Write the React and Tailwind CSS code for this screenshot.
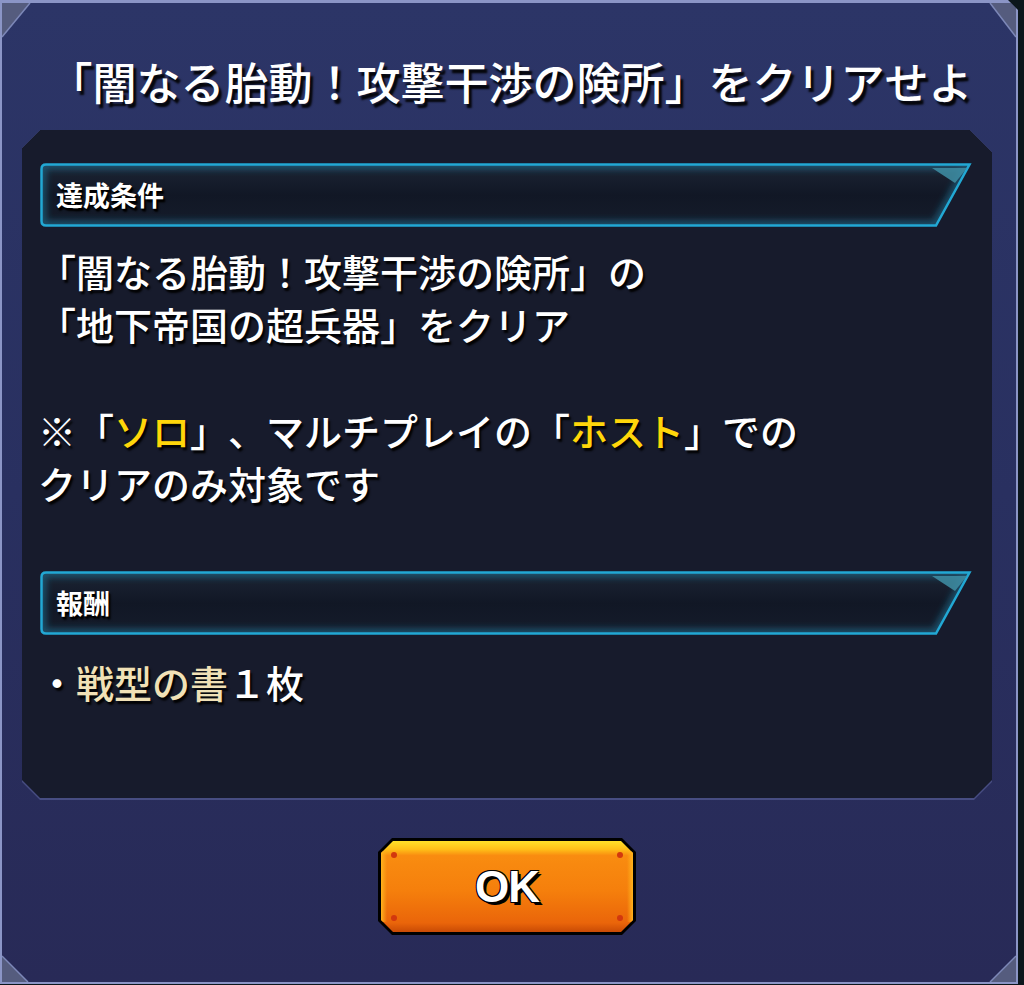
const HP = "M6 1.5 H929.5 L896 62.5 H6 Q1.5 62.5 1.5 58 V6 Q1.5 1.5 6 1.5 Z";

function SectionHeader({ label }) {
  return (
    <div className="relative w-[932px] h-[64px]">
      <svg className="absolute inset-0" width="932" height="64" viewBox="0 0 932 64">
        <defs>
          <linearGradient id="hg" x1="0" y1="0" x2="0" y2="1">
            <stop offset="0" stopColor="#1c2535" />
            <stop offset="0.5" stopColor="#111725" />
            <stop offset="1" stopColor="#151c2b" />
          </linearGradient>
          <clipPath id="hc">
            <path d={HP} />
          </clipPath>
          <filter id="hb" x="-5%" y="-50%" width="110%" height="200%">
            <feGaussianBlur stdDeviation="3" />
          </filter>
        </defs>
        <path d={HP} fill="url(#hg)" />
        <g clipPath="url(#hc)">
          <path d={HP} fill="none" stroke="#1e7fa3" strokeWidth="10" strokeOpacity="0.5" filter="url(#hb)" />
        </g>
        <path d={HP} fill="none" stroke="#22a8d4" strokeWidth="2.5" />
        <polygon points="892,5 927,5 915,20" fill="#3f8fa6" opacity="0.85" />
      </svg>
      <div className="relative h-full flex items-center pl-[16px] text-[27px] font-bold text-white [text-shadow:2px_3px_2px_rgba(0,0,0,1),1px_2px_1px_rgba(0,0,0,1)]">
        {label}
      </div>
    </div>
  );
}

function Corner({ className, points, line }) {
  return (
    <svg className={"absolute " + className} width="40" height="40" viewBox="0 0 40 40">
      <polygon points={points} fill="#555c7e" />
      <polyline points={line} fill="none" stroke="#7d88b8" strokeWidth="1.5" />
    </svg>
  );
}

export default function App() {
  return (
    <div className="w-[1024px] h-[985px] bg-[#0b161b] overflow-hidden font-['Noto_Sans_CJK_JP','Noto_Sans',sans-serif] [text-spacing-trim:space-all]">
      <div className="relative w-[1018px] h-[984px] border-2 border-t-[3px] border-[#8b95c6] bg-[linear-gradient(to_bottom,#2c3567,#293060_50%,#282a57)] flex flex-col [clip-path:polygon(0_0,calc(100%_-_10px)_0,100%_10px,100%_100%,0_100%)]">
        <Corner className="left-0 top-0" points="0,0 28,0 0,34" line="28,0 0,34" />
        <Corner className="right-0 top-0" points="14,0 40,0 40,34" line="14,0 40,34" />
        <Corner className="left-0 bottom-0" points="0,14 0,40 26,40" line="0,14 26,40" />
        <Corner className="right-0 bottom-0" points="40,14 40,40 14,40" line="40,14 14,40" />

        <div className="h-[127px] pt-[28px] flex items-center justify-center pl-[3px] text-[44px] font-medium text-white leading-none whitespace-nowrap [text-shadow:3px_4px_2px_rgba(0,0,0,0.9)]">
          「闇なる胎動！攻撃干渉の険所」をクリアせよ
        </div>

        <div className="ml-[20px] w-[970px] h-[670px] bg-[#474d82] [clip-path:polygon(18px_0,calc(100%_-_22px)_0,100%_22px,100%_calc(100%_-_18px),calc(100%_-_18px)_100%,18px_100%,0_calc(100%_-_18px),0_18px)]">
          <div className="h-[668px] bg-[#171b2c] pt-[33px] pl-[18px] [clip-path:polygon(18px_0,calc(100%_-_22px)_0,100%_22px,100%_calc(100%_-_18px),calc(100%_-_18px)_100%,18px_100%,0_calc(100%_-_18px),0_18px)]">
            <SectionHeader label="達成条件" />
            <div className="mt-[17px] -ml-[2px] text-[38px] leading-[53px] font-medium text-white whitespace-nowrap [text-shadow:2px_3px_2px_rgba(0,0,0,0.95)]">
              <div>「闇なる胎動！攻撃干渉の険所」の</div>
              <div>「地下帝国の超兵器」をクリア</div>
              <div className="h-[53px]" />
              <div>
                ※「<span className="text-[#ffd60a]">ソロ</span>」、マルチプレイの「<span className="text-[#ffd60a]">ホスト</span>」での
              </div>
              <div>クリアのみ対象です</div>
            </div>
            <div className="mt-[62px]">
              <SectionHeader label="報酬" />
            </div>
            <div className="mt-[20px] -ml-[2px] text-[38px] leading-[53px] font-medium text-white whitespace-nowrap [text-shadow:2px_3px_2px_rgba(0,0,0,0.95)]">
              ・<span className="text-[#f1e1b6]">戦型の書</span>１枚
            </div>
          </div>
        </div>

        <div className="ml-[376px] mt-[38px] w-[258px] h-[97px] p-[3px] bg-black [clip-path:polygon(14px_0,calc(100%_-_14px)_0,100%_14px,100%_calc(100%_-_14px),calc(100%_-_14px)_100%,14px_100%,0_calc(100%_-_14px),0_14px)]">
          <div className="relative w-full h-full bg-[linear-gradient(to_bottom,#ffe12a_0%,#ffc018_9%,#f98c10_16%,#f57f0c_55%,#ea650a_90%,#c94a05_100%)] [clip-path:polygon(12px_0,calc(100%_-_12px)_0,100%_12px,100%_calc(100%_-_12px),calc(100%_-_12px)_100%,12px_100%,0_calc(100%_-_12px),0_12px)] flex items-center justify-center">
            <div className="absolute left-0 top-[10px] bottom-[10px] w-[6px] bg-[linear-gradient(to_right,#ffb21c,transparent)]" />
            <div className="absolute right-0 top-[10px] bottom-[10px] w-[6px] bg-[linear-gradient(to_left,#ffb21c,transparent)]" />
            <div className="absolute left-[10px] top-[11px] w-[6px] h-[6px] rounded-full bg-[#d2380e]" />
            <div className="absolute right-[10px] top-[11px] w-[6px] h-[6px] rounded-full bg-[#d2380e]" />
            <div className="absolute left-[10px] bottom-[11px] w-[6px] h-[6px] rounded-full bg-[#d2380e]" />
            <div className="absolute right-[10px] bottom-[11px] w-[6px] h-[6px] rounded-full bg-[#d2380e]" />
            <span className="relative font-['Liberation_Sans',Arial,sans-serif] font-bold text-[44px] leading-none tracking-[-1px] text-white [text-shadow:-1px_-1px_0_#000,1px_-1px_0_#000,-1px_1px_0_#000,1px_1px_0_#000,3px_3px_0_#000]">
              OK
            </span>
          </div>
        </div>
      </div>
    </div>
  );
}
